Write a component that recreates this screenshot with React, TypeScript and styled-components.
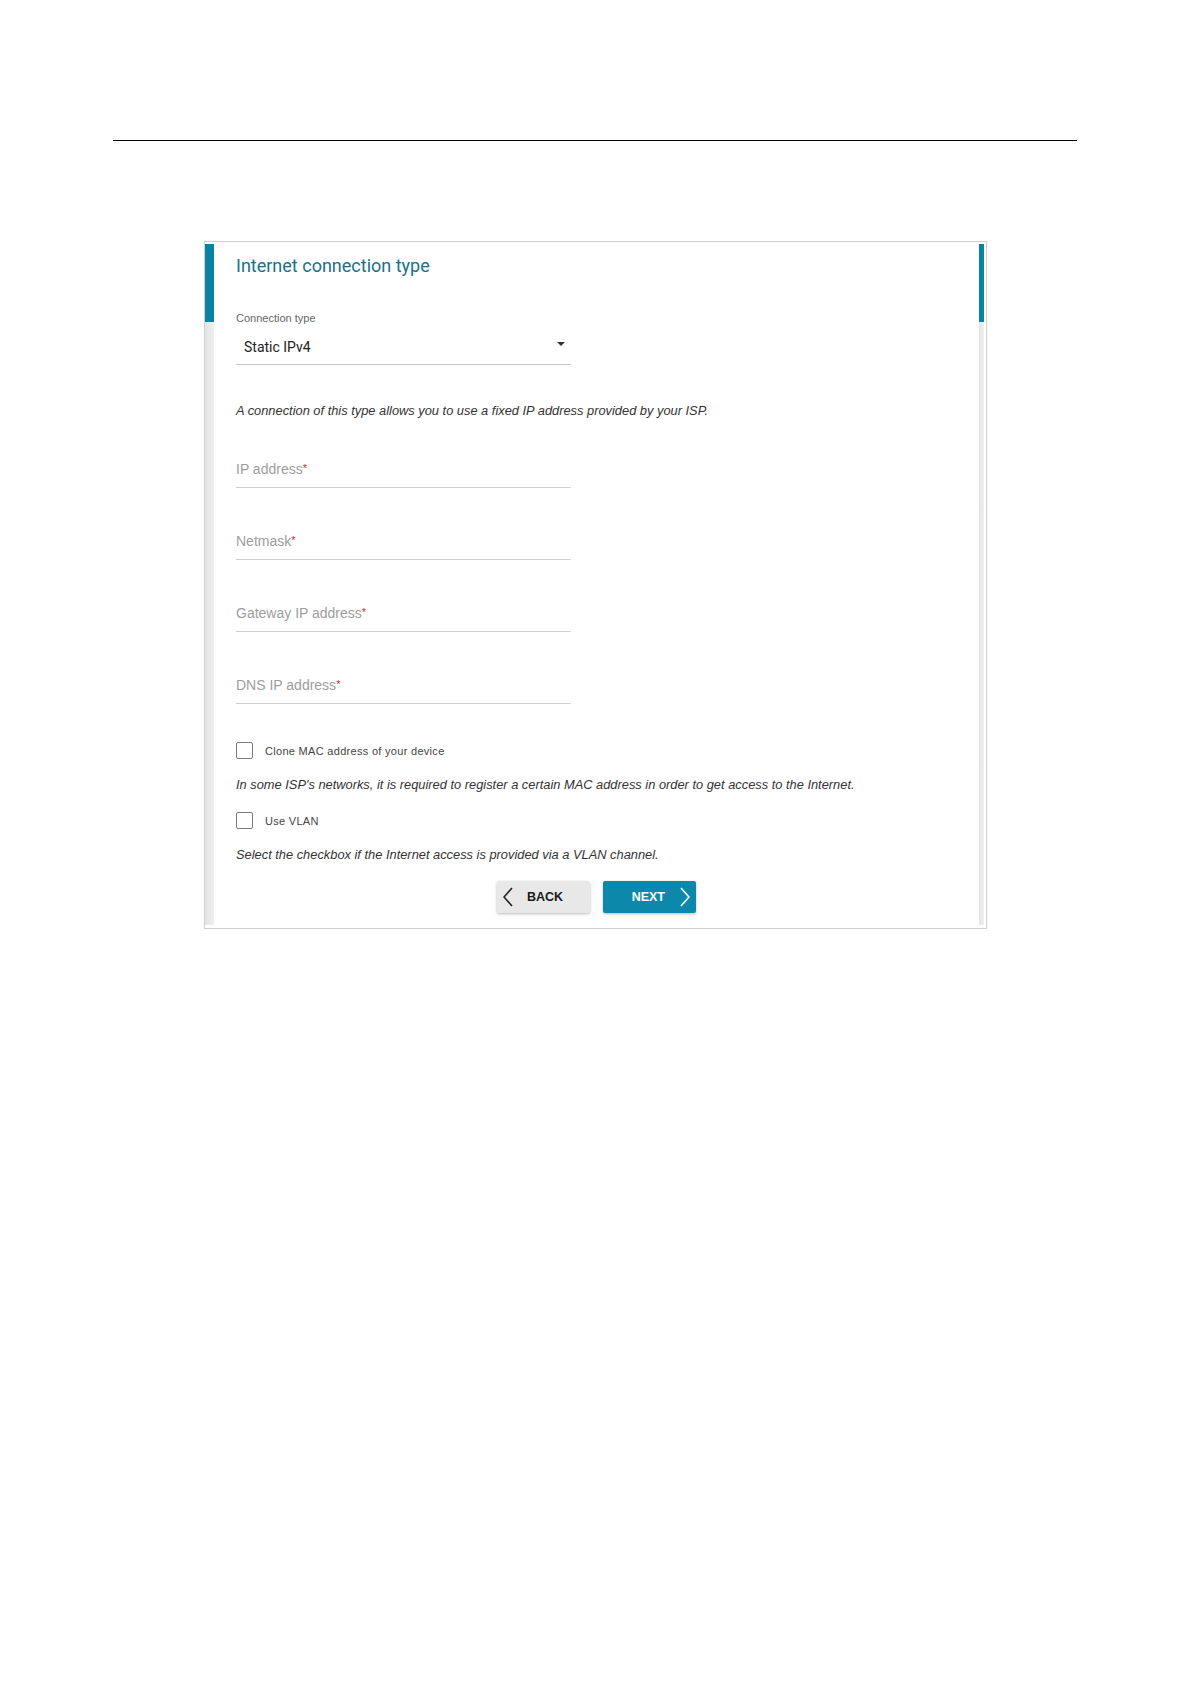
import React from "react";
import styled, { createGlobalStyle } from "styled-components";

const Global = createGlobalStyle`
  html, body { margin: 0; padding: 0; background: #ffffff; }
  body { font-family: "Liberation Sans", Arial, sans-serif; color: #333; }
`;

const Page = styled.div`
  width: 1190px;
  min-height: 1684px;
  box-sizing: border-box;
  padding: 140px 113px 0 113px;
`;

const Rule = styled.div`
  border-top: 1px solid #000;
  height: 0;
`;

const Panel = styled.section`
  margin: 100px 0 0 91px;
  width: 783px;
  height: 688px;
  box-sizing: border-box;
  border: 1px solid #cfcfcf;
  display: flex;
  align-items: stretch;
  background: #fff;
`;

const Rail = styled.div<{ $w: number; $side: "left" | "right" }>`
  width: ${(p) => p.$w}px;
  flex: none;
  margin: 2px ${(p) => (p.$side === "right" ? 2 : 0)}px 3px 0;
  display: flex;
  flex-direction: column;
`;

const RailActive = styled.div`
  height: 78px;
  background: #0a82a3;
`;

const RailTrack = styled.div`
  flex: 1;
  background: linear-gradient(to right, #e3e3e3, #efefef);
`;

const Content = styled.div`
  flex: 1;
  padding: 12px 22px 0 22px;
  display: flex;
  flex-direction: column;
`;

const Title = styled.h2`
  margin: 0;
  font-family: Roboto, "Liberation Sans", sans-serif;
  font-weight: 400;
  font-size: 18px;
  line-height: 24px;
  color: #17718d;
`;

const SmallLabel = styled.div`
  margin-top: 33px;
  font-size: 11px;
  line-height: 14px;
  color: #666;
`;

const Select = styled.div`
  margin-top: 4px;
  width: 335px;
  box-sizing: border-box;
  padding: 8px 6px 7px 8px;
  border-bottom: 1px solid #c8c8c8;
  display: flex;
  align-items: center;
  justify-content: space-between;
`;

const SelectValue = styled.span`
  font-family: Roboto, "Liberation Sans", sans-serif;
  font-size: 14px;
  line-height: 20px;
  color: #222;
`;

const Caret = styled.span`
  width: 0;
  height: 0;
  border-left: 4px solid transparent;
  border-right: 4px solid transparent;
  border-top: 4px solid #333;
  margin-top: -6px;
`;

const Note = styled.p<{ $top: number }>`
  margin: ${(p) => p.$top}px 0 0 0;
  font-size: 12.85px;
  line-height: 16px;
  font-style: italic;
  color: #333;
`;

const Fields = styled.div`
  margin-top: 30px;
  display: flex;
  flex-direction: column;
  gap: 33px;
`;

const Field = styled.div`
  width: 335px;
  height: 39px;
  box-sizing: border-box;
  padding: 10px 0 8px 0;
  border-bottom: 1px solid #d0d0d0;
  font-size: 14px;
  line-height: 20px;
  color: #9d9d9d;
`;

const Req = styled.span`
  color: #d9281e;
  font-size: 11px;
  line-height: 0;
  position: relative;
  top: -2px;
`;

const CheckRow = styled.label<{ $top: number }>`
  margin-top: ${(p) => p.$top}px;
  display: flex;
  align-items: center;
  gap: 12px;
  height: 17px;
`;

const Box = styled.span`
  width: 17px;
  height: 17px;
  box-sizing: border-box;
  border: 1.5px solid #7a7a7a;
  border-radius: 2px;
  flex: none;
`;

const CheckText = styled.span`
  font-size: 11px;
  letter-spacing: 0.3px;
  color: #444;
`;

const Buttons = styled.div`
  margin-top: 18px;
  display: flex;
  justify-content: center;
  gap: 13px;
`;

const Button = styled.button<{ $primary?: boolean }>`
  width: 93px;
  height: 32px;
  border: none;
  border-radius: 2px;
  display: flex;
  align-items: center;
  justify-content: ${(p) => (p.$primary ? "flex-end" : "flex-start")};
  gap: ${(p) => (p.$primary ? 15 : 14)}px;
  padding: ${(p) => (p.$primary ? "0 6px 0 0" : "0 0 0 6px")};
  background: ${(p) => (p.$primary ? "#0c89aa" : "#e8e8e8")};
  color: ${(p) => (p.$primary ? "#fff" : "#1a1a1a")};
  box-shadow: 0 1px 3px rgba(0, 0, 0, 0.28);
  font-family: "Liberation Sans", Arial, sans-serif;
  font-weight: 700;
  font-size: 12.5px;
  cursor: pointer;
`;

const Chevron = ({ dir, color }: { dir: "left" | "right"; color: string }) => (
  <svg width="10" height="20" viewBox="0 0 10 20">
    <polyline
      points={dir === "left" ? "9,1 1,10 9,19" : "1,1 9,10 1,19"}
      fill="none"
      stroke={color}
      strokeWidth="1.6"
    />
  </svg>
);

const fields = ["IP address", "Netmask", "Gateway IP address", "DNS IP address"];

export default function App() {
  return (
    <>
      <Global />
      <Page>
        <Rule />
        <Panel>
          <Rail $w={9} $side="left">
            <RailActive />
            <RailTrack />
          </Rail>
          <Content>
            <Title>Internet connection type</Title>
            <SmallLabel>Connection type</SmallLabel>
            <Select>
              <SelectValue>Static IPv4</SelectValue>
              <Caret />
            </Select>
            <Note $top={38}>
              A connection of this type allows you to use a fixed IP address provided by your ISP.
            </Note>
            <Fields>
              {fields.map((f) => (
                <Field key={f}>
                  {f}
                  <Req>*</Req>
                </Field>
              ))}
            </Fields>
            <CheckRow $top={38}>
              <Box />
              <CheckText>Clone MAC address of your device</CheckText>
            </CheckRow>
            <Note $top={18}>
              In some ISP's networks, it is required to register a certain MAC address in order to get access to the Internet.
            </Note>
            <CheckRow $top={19}>
              <Box />
              <CheckText>Use VLAN</CheckText>
            </CheckRow>
            <Note $top={18}>
              Select the checkbox if the Internet access is provided via a VLAN channel.
            </Note>
            <Buttons>
              <Button>
                <Chevron dir="left" color="#222" />
                BACK
              </Button>
              <Button $primary>
                NEXT
                <Chevron dir="right" color="#fff" />
              </Button>
            </Buttons>
          </Content>
          <Rail $w={5} $side="right">
            <RailActive />
            <RailTrack />
          </Rail>
        </Panel>
      </Page>
    </>
  );
}
